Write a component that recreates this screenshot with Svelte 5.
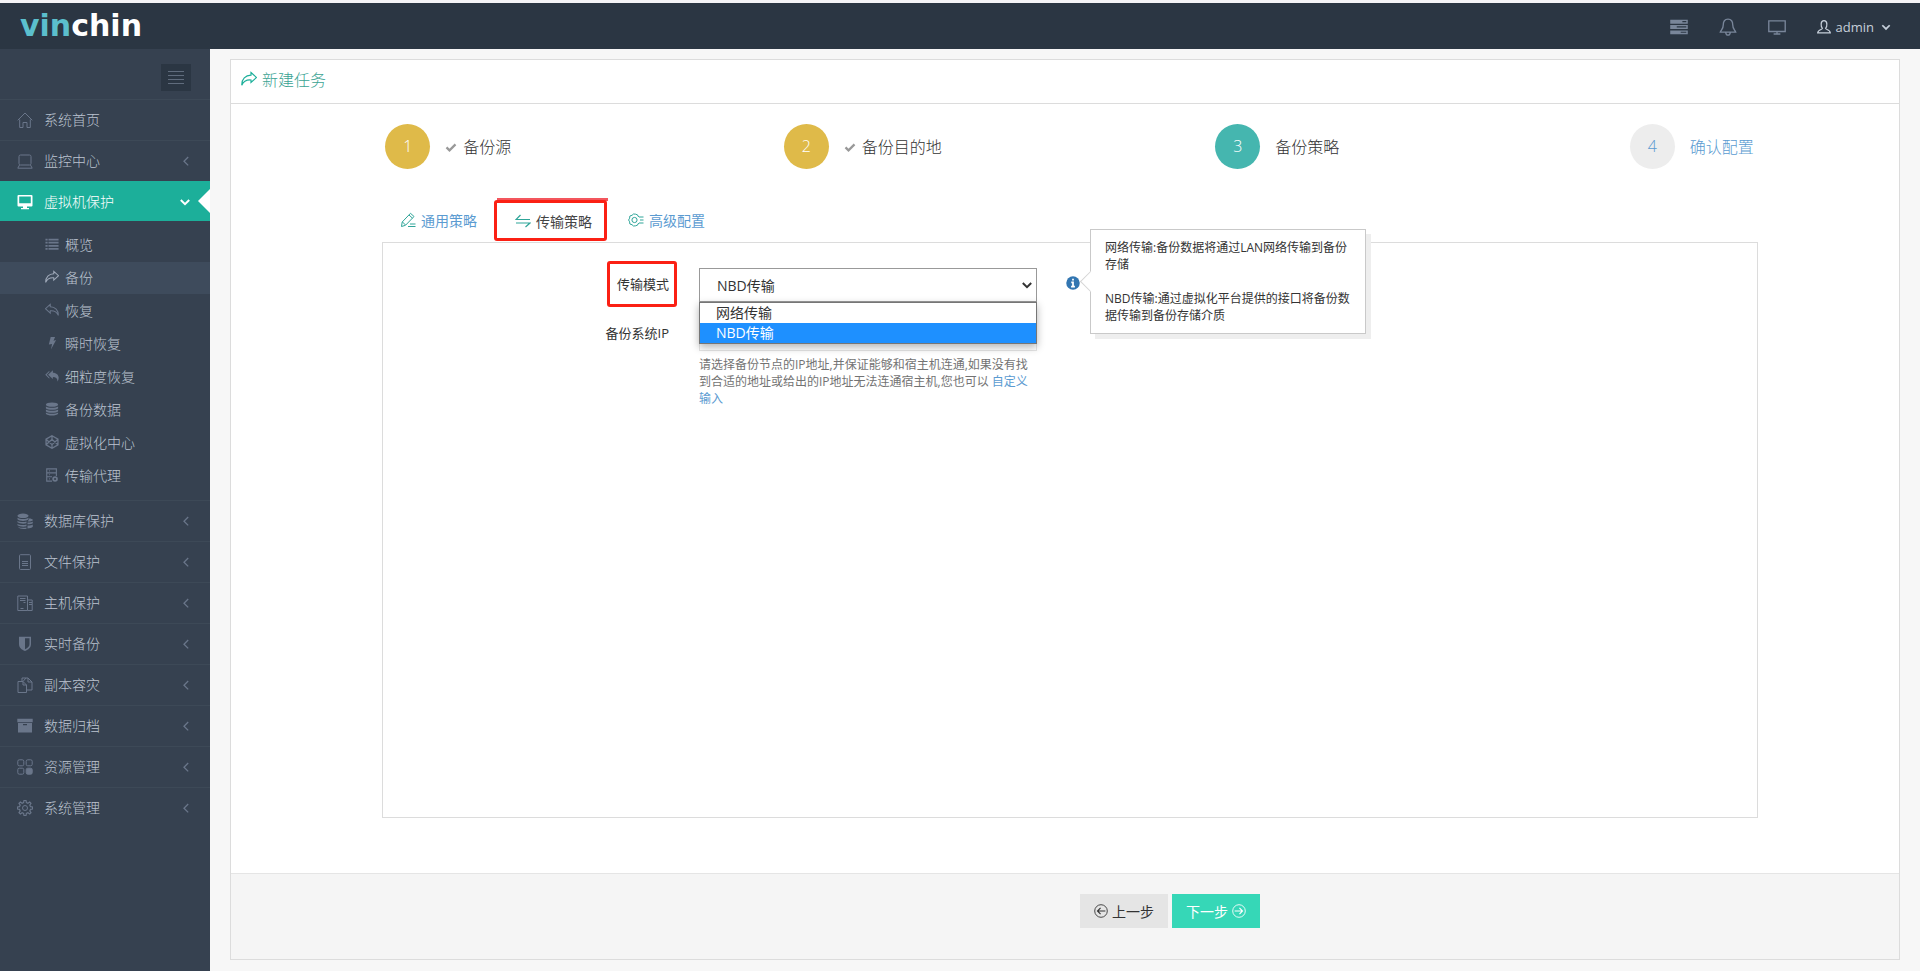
<script lang="ts">
	type MenuItem = {
		label: string;
		icon: string;
		arrow?: boolean;
		children?: { label: string; icon: string }[];
	};

	const icons: Record<string, string> = {
		home: '<path d="M.7 8.3 8 1l7.300 7.300M2.700 7.500v8h3.300v-5h4v5h3.300v-8"/>',
		laptop: '<rect x="2" y="2" width="12" height="10" rx="1.500"/><path d="M2.500 12 .8 15.200h14.400L13.500 12"/>',
		desktop: '<path fill="currentColor" fill-rule="evenodd" stroke="none" d="M1.500 1h13a1 1 0 0 1 1 1v9.500a1 1 0 0 1-1 1H10V14h2v1.200H4V14h2v-1.500H1.500a1 1 0 0 1-1-1V2a1 1 0 0 1 1-1Zm.7 1.500v6.700h11.600V2.500Z"/>',
		list: '<path stroke-width="2" d="M.5 3H3M4 3h11.500M.5 6.500H3M4 6.500h11.500M.5 10H3M4 10h11.500M.5 13.500H3M4 13.500h11.500"/>',
		share: '<path stroke-width="1.200" d="M10 1.500 15.500 6.500 10 11.500V9C5.500 8.700 2.500 10 .8 14.200.6 8 4.500 4.300 10 4.200Z"/>',
		reply: '<path stroke-width="1.200" d="M6 1.500.5 6.500 6 11.500V9c4.500-.3 7.500 1 9.200 5.200C15.400 8 11.500 4.300 6 4.200Z"/>',
		bolt: '<path fill="currentColor" stroke="none" d="M6.500 1h5L9.700 5.300l3-.6L6.800 15.500l1.300-6.500-3.700.8Z"/>',
		replyAll: '<path fill="currentColor" stroke="none" d="M9 1.500 3.500 6.500 9 11.500V9c3.500 0 5.500 1.500 5.200 5.500C17.500 9.500 15 4.300 9 4.200ZM5 2 .3 6.500 5 11.200V9.600L2 6.500l3-3Z"/>',
		database: '<g fill="currentColor" stroke="none"><ellipse cx="8" cy="3" rx="7" ry="2.500"/><path d="M1 5c2 2 12 2 14 0v2c-1.500 2.300-12.500 2.300-14 0Z"/><path d="M1 8.500c2 2 12 2 14 0v2c-1.500 2.300-12.500 2.300-14 0Z"/><path d="M1 12c2 2 12 2 14 0v1.500c-1.500 2.700-12.500 2.700-14 0Z"/></g>',
		hexagon: '<path stroke-width="1.500" d="M8 .8 14.800 4.800v6.400L8 15.200 1.200 11.200V4.800ZM1.200 4.800 8 11l6.800-6.200M1.200 11.200 8 5l6.800 6.200M8 .8V5M8 11v4.200"/>',
		agent: '<path stroke-width="1.300" d="M8 15H2V1h11v8M2 5.500h11M2 10h6M4.500 3.300h1M4.500 7.700h1M4.500 12.500h1"/><circle cx="11.500" cy="12.500" r="2.200" stroke-width="2"/>',
		databases: '<g fill="currentColor" stroke="none"><ellipse cx="6" cy="2.800" rx="5.500" ry="2.300"/><path d="M.5 4.700c2 1.700 9 1.700 11 0v1.500c-2 2.300-9 2.300-11 0ZM.5 7.700c2 1.700 6.500 1.700 9 .8v1.800c-2.500.8-7.500.4-9-1ZM.5 10.700c2 1.700 6.500 1.700 9 .8v1.800c-2.500.8-7.500.4-9-1ZM1 13.700c2 1.300 6 1.400 8.500.8v1.300C6 16.400 2 15.700 1 13.700Z"/><path d="M12 5.500c2 0 3.800.5 3.800 1.500s-2 1.600-5.300 1.500c1-.8 1.500-2 1.500-3ZM10.500 9.500c2 .1 4.500-.2 5.300-1v1.800c-.8.8-3.300 1-5.300 1ZM10.500 12.500c2 .1 4.500-.2 5.300-1v2.300c-.8 1-3.300 1.600-5.300 1.600Z"/></g>',
		file: '<rect x="2.500" y=".7" width="11" height="14.800" rx="1"/><path d="M5 7.500h6M5 9.500h6M5 11.500h6"/>',
		host: '<path d="M.8 1h9.700v14.500H.8ZM10.500 5h4.700v10.500h-4.700M3 3.500h5.500M3 5.500h5.500M6.500 7.500h2M3.500 13.500h3M12 7.500h3M12 9.500h3"/>',
		shield: '<path fill="currentColor" fill-rule="evenodd" stroke="none" d="M2 .8h12V8c0 3.500-2.500 5.700-6 7C4.500 13.700 2 11.500 2 8Zm6 1.500v11c2.800-1.300 4.500-2.800 4.500-5.300V2.300Z"/>',
		copy: '<path d="M6 4.500H1v11h8.500V8L6 4.500V8h3.500M5 4.500V1h6l4 4v8H9.500M11 1v4h4M6 4.500 9 1"/>',
		archive: '<path fill="currentColor" fill-rule="evenodd" stroke="none" d="M.3.800h15.400v3.500H.3ZM1 5h14v9.500H1Zm5 1v1.200h4V6Z"/>',
		apps: '<rect x=".8" y=".8" width="6" height="6" rx="1.500"/><rect x="9.200" y=".8" width="6" height="6" rx="1.500"/><rect x=".8" y="9.200" width="6" height="6" rx="1.500"/><rect x="9.200" y="9.200" width="6" height="6" rx="1.500" fill="currentColor"/>',
		gear: '<path stroke-width="1.200" d="m6.600 2.500.4-2h2l.4 2 1.500.7L12.700 2 14 3.400l-1.200 1.700.7 1.500 2 .4v2l-2 .4-.7 1.500 1.200 1.700-1.300 1.400-1.800-1.200-1.500.7-.4 2H7l-.4-2-1.500-.7L3.400 14 2 12.700l1.200-1.800-.7-1.500-2-.4V7l2-.4.700-1.500L2 3.400 3.400 2l1.700 1.200Z"/><circle cx="8" cy="8" r="2.500"/>',
		server: '<path fill="currentColor" fill-rule="evenodd" stroke="none" d="M.2 1.500h15.600v3.500H.2Zm10.800 1.200v1h3.500v-1ZM.2 6.200h15.600v3.500H.2Zm5.800 1.200v1h8.500v-1ZM.2 11h15.600v3.500H.2Zm9.300 1.200v1h5v-1Z"/>',
		bell: '<path stroke-width="1.200" d="M8 1C5 1 3.800 3.200 3.800 6c0 4-1.800 4.500-2.600 6.500h13.600C14 10.500 12.200 10 12.200 6 12.200 3.200 11 1 8 1ZM6 13c.3 3 3.700 3 4 0"/>',
		screen: '<path stroke-width="1.200" d="M.7 2.500h14.600v9.500H.7ZM8 12v2.500M5 14.200h6"/>',
		user: '<path stroke-width="1.400" d="M6.200 9.500C4.300 7.500 3.600.8 8 .8s3.700 6.700 1.800 8.700c-.5 1.500 5.200 1.300 5.400 5.200H.8c.2-3.900 5.900-3.700 5.400-5.200Z"/>',
		pencil: '<path d="m1.500 14.500.7-4.500L10.500 1.300 14 4.500 5.500 13.300ZM9 3l3.500 3.200M2.500 10l3 3M10 12h5.500M8 14.500h7.500"/>',
		transfer: '<path stroke-width="1.200" d="M15 6.500H1L5.500 2M1 10h14l-4.500 4"/>',
		settings: '<path d="M7.700 2.200 5.500 2 4 3.300 1.900 4 1.600 6.200.6 8l1 1.800.3 2.200 2.100.7L5.500 14l2.200-.2 2-.8M7.700 2.200l2 .8"/><path d="m9.500 3 1.200 2M9.500 13l1.200-2"/><circle cx="6.500" cy="8" r="2.600"/><path d="M11 5h4.500M12 8h3.500M11 11h4.500"/>',
		check: '<path stroke-width="3" d="m2 8.500 4 4 8-8"/>',
		left: '<circle cx="8" cy="8" r="7.200"/><path stroke-width="1.300" d="M13 8H4M7.500 4.500 4 8l3.500 3.500"/>',
		right: '<circle cx="8" cy="8" r="7.200"/><path stroke-width="1.300" d="M3 8h9M8.500 4.500 12 8l-3.500 3.500"/>',
		chevronLeft: '<path stroke-width="1.300" d="M11.200 4 7 8.200l4.200 4.200"/>',
		chevronDown: '<path stroke-width="2" d="m3.800 6 4.200 4.200L12.200 6"/>',
		info: '<circle cx="8" cy="8" r="7.700" fill="currentColor" stroke="none"/><path stroke="#fff" stroke-width="2" d="M8 3v2.200M6 7.300h2v4.200M5.800 12h4.400"/>'
	};

	const menu: MenuItem[] = [
		{ label: '系统首页', icon: 'home' },
		{ label: '监控中心', icon: 'laptop', arrow: true },
		{
			label: '虚拟机保护',
			icon: 'desktop',
			children: [
				{ label: '概览', icon: 'list' },
				{ label: '备份', icon: 'share' },
				{ label: '恢复', icon: 'reply' },
				{ label: '瞬时恢复', icon: 'bolt' },
				{ label: '细粒度恢复', icon: 'replyAll' },
				{ label: '备份数据', icon: 'database' },
				{ label: '虚拟化中心', icon: 'hexagon' },
				{ label: '传输代理', icon: 'agent' }
			]
		},
		{ label: '数据库保护', icon: 'databases', arrow: true },
		{ label: '文件保护', icon: 'file', arrow: true },
		{ label: '主机保护', icon: 'host', arrow: true },
		{ label: '实时备份', icon: 'shield', arrow: true },
		{ label: '副本容灾', icon: 'copy', arrow: true },
		{ label: '数据归档', icon: 'archive', arrow: true },
		{ label: '资源管理', icon: 'apps', arrow: true },
		{ label: '系统管理', icon: 'gear', arrow: true }
	];

	const steps = [
		{ label: '备份源', state: 'done' },
		{ label: '备份目的地', state: 'done' },
		{ label: '备份策略', state: 'active' },
		{ label: '确认配置', state: 'todo' }
	];

	const tabs = [
		{ label: '通用策略', icon: 'pencil' },
		{ label: '传输策略', icon: 'transfer' },
		{ label: '高级配置', icon: 'settings' }
	];

	const modes = ['网络传输', 'NBD传输'];

	let activeTab = $state('传输策略');
	let activePage = $state('备份');
	let mode = $state('NBD传输');
	let listOpen = $state(true);

	function pickMode(value: string) {
		mode = value;
		listOpen = false;
	}
</script>

{#snippet icon(name: string, size = 16)}
	<svg
		class="icon"
		width={size}
		height={size}
		viewBox="0 0 16 16"
		fill="none"
		stroke="currentColor"
		aria-hidden="true">{@html icons[name]}</svg
	>
{/snippet}

<div class="page">
	<header class="topbar">
		<a href="/" class="logo"><span>vin</span>chin</a>
		<nav class="top-menu">
			<button aria-label="任务">{@render icon('server', 18)}</button>
			<button aria-label="告警">{@render icon('bell', 18)}</button>
			<button aria-label="大屏">{@render icon('screen', 18)}</button>
			<button class="account">
				{@render icon('user', 14)}<span>admin</span>{@render icon('chevronDown', 14)}
			</button>
		</nav>
	</header>

	<div class="main">
		<aside class="sidebar">
			<div class="toggler-row">
				<button class="toggler" aria-label="收起菜单"><i></i><i></i><i></i><i></i></button>
			</div>
			<ul class="menu">
				{#each menu as item (item.label)}
					<li class:open={item.children}>
						<a href="#{item.icon}" class="menu-link">
							{@render icon(item.icon)}
							<span>{item.label}</span>
							{#if item.children}
								{@render icon('chevronDown')}
							{:else if item.arrow}
								{@render icon('chevronLeft')}
							{/if}
						</a>
						{#if item.children}
							<ul class="sub-menu">
								{#each item.children as child (child.label)}
									<li>
										<a
											href="#{child.icon}"
											class:current={child.label === activePage}
											onclick={() => (activePage = child.label)}
										>
											{@render icon(child.icon, 14)}{child.label}
										</a>
									</li>
								{/each}
							</ul>
						{/if}
					</li>
				{/each}
			</ul>
		</aside>

		<main class="content">
			<section class="panel">
				<h1>{@render icon('share')}新建任务</h1>

				<div class="wizard">
					<ol class="steps">
						{#each steps as step, i (step.label)}
							<li class={step.state}>
								<span class="number">{i + 1}</span>
								{#if step.state === 'done'}{@render icon('check', 12)}{/if}
								<span class="step-name">{step.label}</span>
							</li>
						{/each}
					</ol>

					<div class="tabs">
						{#each tabs as tab (tab.label)}
							<button
								class="tab"
								class:active={tab.label === activeTab}
								onclick={() => (activeTab = tab.label)}
							>
								{@render icon(tab.icon)}{tab.label}
							</button>
						{/each}
					</div>

					<div class="tab-content">
						<div class="row">
							<div class="label-cell"><label for="mode" class="marked">传输模式</label></div>
							<div class="field">
								<select id="mode" bind:value={mode}>
									{#each modes as m}
										<option>{m}</option>
									{/each}
								</select>
								{@render icon('chevronDown', 16)}
								{#if listOpen}
									<div class="options" role="listbox" aria-label="传输模式">
										{#each modes as m}
											<button role="option" aria-selected={m === mode} onclick={() => pickMode(m)}>{m}</button>
										{/each}
									</div>
								{/if}
							</div>
							<div class="hint">
								{@render icon('info', 14)}
								<div class="popover">
									<p>网络传输:备份数据将通过LAN网络传输到备份存储</p>
									<p>NBD传输:通过虚拟化平台提供的接口将备份数据传输到备份存储介质</p>
								</div>
							</div>
						</div>
						<div class="row">
							<div class="label-cell"><label for="ip">备份系统IP</label></div>
							<div class="field">
								<select id="ip" class="plain"></select>
								<p class="help">
									请选择备份节点的IP地址,并保证能够和宿主机连通,如果没有找到合适的地址或给出的IP地址无法连通宿主机,您也可以
									<a href="#custom">自定义输入</a>
								</p>
							</div>
						</div>
					</div>
				</div>

				<footer class="actions">
					<button class="btn">{@render icon('left', 14)}上一步</button>
					<button class="btn btn-next">下一步{@render icon('right', 14)}</button>
				</footer>
			</section>
		</main>
	</div>
</div>

<style>
	:global(body) {
		background: #f7f7f7;
	}

	.page {
		display: flex;
		flex-direction: column;
		min-height: 100vh;
		font-family: 'Open Sans', 'Noto Sans CJK SC', sans-serif;
		font-size: 14px;
		font-weight: 300;
		color: #333;
	}

	.page :global(*) {
		box-sizing: border-box;
	}

	ul,
	ol {
		list-style: none;
		margin: 0;
		padding: 0;
	}

	p {
		margin: 0;
	}

	a {
		color: #5b9bd1;
		text-decoration: none;
	}

	button,
	select {
		font: inherit;
		color: inherit;
		border: 0;
		background: none;
		padding: 0;
	}

	button {
		cursor: pointer;
	}

	.icon {
		display: block;
		flex: none;
	}

	.topbar {
		display: flex;
		justify-content: space-between;
		height: 49px;
		padding: 0 27px 0 20px;
		background: #2b3643;
		border-top: 3px solid #f4f3f6;
	}

	.logo {
		font-family: 'DejaVu Sans', sans-serif;
		font-size: 30px;
		font-weight: 700;
		line-height: 46px;
		color: #fff;
	}

	.logo span {
		color: #5bbfcd;
	}

	.top-menu {
		display: flex;
		align-items: center;
		gap: 31px;
		color: #79869a;
		padding-top: 2px;
	}

	.account {
		display: flex;
		align-items: center;
		gap: 5px;
		font-size: 13px;
		color: #c6cfda;
		font-weight: 400;
	}

	.main {
		display: flex;
		flex: 1;
	}

	.sidebar {
		flex: none;
		width: 210px;
		background: #364150;
	}

	.toggler-row {
		display: flex;
		justify-content: flex-end;
		padding: 15px 19px 8px;
	}

	.toggler {
		display: flex;
		flex-direction: column;
		justify-content: center;
		gap: 3px;
		width: 30px;
		height: 27px;
		padding: 0 7px;
		background: #2b3643;
	}

	.toggler i {
		height: 1px;
		background: #606c7d;
	}

	.menu-link {
		display: flex;
		align-items: center;
		height: 41px;
		padding: 0 17px;
		border-top: 1px solid #3d4957;
		color: #bcc4d0;
	}

	.menu-link span {
		flex: 1;
		margin-left: 11px;
		padding-bottom: 2px;
	}

	.menu-link .icon {
		color: #6a768a;
	}

	.open .menu-link {
		position: relative;
		height: 40px;
		background: #1caf9a;
		border-color: #1caf9a;
		color: #fff;
	}

	.open .menu-link .icon {
		color: #fff;
	}

	.open .menu-link::after {
		content: '';
		position: absolute;
		right: 0;
		top: 7px;
		border: 12px solid transparent;
		border-left: 0;
		border-right-color: #fff;
	}

	.sub-menu {
		display: flex;
		flex-direction: column;
		gap: 1px;
		padding: 8px 0;
	}

	.sub-menu a {
		display: flex;
		align-items: center;
		gap: 6px;
		height: 32px;
		padding: 0 0 2px 45px;
		color: #bcc4d0;
	}

	.sub-menu .icon {
		color: #6a768a;
	}

	.sub-menu .current {
		background: #3e4b5c;
	}

	.sub-menu .current .icon {
		color: #a0aaba;
	}

	.content {
		display: flex;
		flex: 1;
		min-width: 0;
		padding: 10px 20px 11px;
	}

	.panel {
		display: flex;
		flex: 1;
		flex-direction: column;
		background: #fff;
		border: 1px solid #dcdcdc;
	}

	h1 {
		display: flex;
		align-items: center;
		gap: 5px;
		height: 44px;
		margin: 0;
		padding: 0 10px 6px;
		border-bottom: 1px solid #dcdcdc;
		font-size: 16px;
		font-weight: 300;
		color: #3aa393;
	}

	h1 .icon {
		color: #1caf9a;
	}

	.wizard {
		display: flex;
		flex: 1;
		flex-direction: column;
		padding: 20px 0 55px;
	}

	.steps {
		display: grid;
		grid-template-columns: repeat(4, 1fr);
		padding-left: 10px;
		font-size: 16px;
	}

	.steps li {
		display: flex;
		align-items: center;
		justify-content: center;
	}

	.steps .icon {
		margin-right: 6px;
		color: #999;
	}

	.step-name {
		padding-bottom: 2px;
	}

	.number {
		width: 45px;
		margin-right: 15px;
		border-radius: 50%;
		background: #ededed;
		line-height: 45px;
		text-align: center;
	}

	.done .number {
		background: #dfba49;
		color: #fff;
	}

	.active .number {
		background: #45b6af;
		color: #fff;
	}

	.todo {
		color: #5b9bd1;
	}

	.tabs {
		display: flex;
		gap: 2px;
		margin: 29px 0 0 151px;
		font-weight: 400;
	}

	.tab {
		display: flex;
		align-items: center;
		gap: 5px;
		height: 44px;
		padding: 0 18px;
		color: #5b9bd1;
	}

	.tab .icon {
		color: #2fa599;
	}

	.tab.active {
		position: relative;
		margin-bottom: -1px;
		padding: 0 16px 2px 18px;
		border-top: 3px solid #f3565d;
		background: #fff;
		color: #444;
	}

	.tab.active::after {
		content: '';
		position: absolute;
		top: -1px;
		right: 1px;
		bottom: 1px;
		left: -3px;
		border: 3px solid #fb2014;
		border-radius: 3px;
	}

	.tab-content {
		flex: 1;
		margin: 0 141px 0 151px;
		padding-top: 18px;
		border: 1px solid #dcdcdc;
		font-weight: 400;
	}

	.row {
		display: flex;
		margin-bottom: 8px;
	}

	.label-cell {
		display: flex;
		justify-content: flex-end;
		align-items: flex-start;
		width: 294px;
		padding-top: 6px;
		font-size: 13px;
		line-height: 34px;
	}

	.label-cell label {
		margin-right: 8px;
	}

	.label-cell .marked {
		margin: -6px 0;
		padding: 3px 5px 3px 7px;
		border: 3px solid #fb2014;
		border-radius: 3px;
	}

	.field {
		position: relative;
		width: 338px;
		margin-left: 22px;
		padding-top: 7px;
	}

	select {
		display: block;
		width: 100%;
		height: 34px;
		padding: 0 17px;
		border: 1px solid #999;
		background: #fff;
		appearance: none;
	}

	.plain {
		border-color: #e5e5e5;
	}

	.field > .icon {
		position: absolute;
		right: 2px;
		top: 16px;
		pointer-events: none;
	}

	.options {
		position: absolute;
		left: 0;
		right: 0;
		top: 41px;
		z-index: 1;
		border: 1px solid #767676;
		background: #fff;
		box-shadow: 0 3px 8px rgba(0, 0, 0, 0.3);
	}

	.options button {
		display: block;
		width: 100%;
		padding-left: 16px;
		line-height: 20px;
		text-align: left;
	}

	.options [aria-selected='true'] {
		background: #1e90ff;
		color: #fff;
	}

	.help {
		margin-top: 5px;
		font-size: 12px;
		line-height: 17px;
		color: #737373;
	}

	.hint {
		position: relative;
		margin-left: 29px;
		padding-top: 15px;
		color: #3276b1;
	}

	.popover {
		position: absolute;
		left: 24px;
		top: -32px;
		width: 276px;
		padding: 9px 14px;
		border: 1px solid #c9c9c9;
		background: #fff;
		box-shadow: 5px 5px #eee;
		font-size: 12px;
		line-height: 17px;
		color: #333;
	}

	.popover p + p {
		margin-top: 17px;
	}

	.popover::before {
		content: '';
		position: absolute;
		left: -8px;
		top: 44px;
		width: 14px;
		height: 14px;
		border: 1px solid #d5d5d5;
		border-width: 0 0 1px 1px;
		background: #fff;
		transform: rotate(45deg);
	}

	.actions {
		display: flex;
		justify-content: center;
		gap: 4px;
		padding: 20px 0 31px 210px;
		border-top: 1px solid #e5e5e5;
		background: #f5f5f5;
		font-weight: 400;
	}

	.btn {
		display: flex;
		align-items: center;
		gap: 4px;
		height: 34px;
		padding: 0 14px;
		background: #e5e5e5;
	}

	.btn-next {
		background: #36d7b7;
		color: #fff;
	}
</style>
